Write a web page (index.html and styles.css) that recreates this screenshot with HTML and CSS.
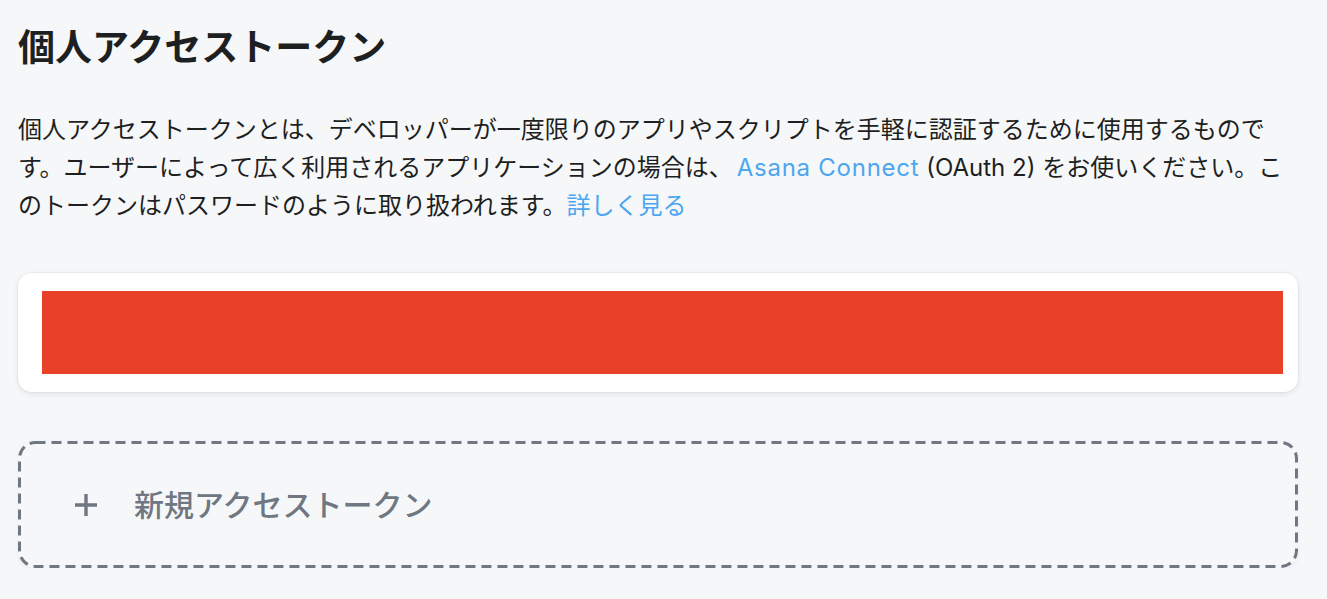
FILE: index.html
```html
<!DOCTYPE html>
<html lang="ja">
<head>
<meta charset="utf-8">
<link rel="stylesheet" href="styles.css">
</head>
<body>
<main class="page">
  <h1 class="title">個人アクセストークン</h1>
  <p class="desc">個人アクセストークンとは、デベロッパーが一度限りのアプリやスクリプトを手軽に認証するために使用するものです。ユーザーによって広く利用されるアプリケーションの場合は、<a class="link link-latin" href="#">Asana Connect</a> (OAuth 2) をお使いください。このトークンはパスワードのように取り扱われます。<a class="link" href="#">詳しく見る</a></p>
  <section class="card">
    <div class="redact"></div>
  </section>
  <button class="new-token" type="button">
    <svg class="dash" width="100%" height="100%" aria-hidden="true"><rect x="1.5" y="1.5" width="1277" height="124" rx="16" ry="16" fill="none" stroke="#6f7782" stroke-width="3" stroke-dasharray="10 6"/></svg>
    <svg class="plus" width="24" height="24" viewBox="0 0 24 24" aria-hidden="true"><path d="M12 1v22M1 12h22" stroke="currentColor" stroke-width="3.4" fill="none"/></svg>
    <span class="new-label">新規アクセストークン</span>
  </button>
</main>
</body>
</html>
```

FILE: styles.css
```css
html, body {
  margin: 0;
  padding: 0;
  background: #f6f7f9;
}
body {
  font-family: Inter, "Noto Sans CJK JP", sans-serif;
  color: #1e1f21;
}
.page {
  width: 1280px;
  padding: 21px 0 0 18px;
  display: flex;
  flex-direction: column;
}
.title {
  margin: 0;
  font-size: 37px;
  line-height: 48px;
  font-weight: 700;
  font-family: "Noto Sans CJK JP", sans-serif;
  color: #1e1f21;
}
.desc {
  margin: 42px 0 0 0;
  font-size: 24px;
  line-height: 38px;
  font-weight: 400;
}
.link {
  color: #4ca6f0;
  text-decoration: none;
}
.link-latin {
  letter-spacing: 0.75px;
  margin-left: 4px;
}
.card {
  margin-top: 48px;
  background: #ffffff;
  border-radius: 14px;
  box-shadow: 0 0 0 1px rgba(0,0,0,0.03), 0 2px 6px rgba(0,0,0,0.09);
  padding: 18px 15px 18px 24px;
  display: flex;
}
.redact {
  flex: 1;
  height: 83px;
  background: #e84127;
}
.new-token {
  position: relative;
  margin-top: 49px;
  height: 127px;
  box-sizing: border-box;
  border: none;
  border-radius: 16px;
  background: #f6f7f9;
  box-shadow: 0 1px 4px rgba(0,0,0,0.06);
  display: flex;
  align-items: center;
  padding: 0 0 0 56px;
  color: #6f7782;
  font-family: Inter, "Noto Sans CJK JP", sans-serif;
  cursor: pointer;
}
.dash {
  position: absolute;
  left: 0;
  top: 0;
  pointer-events: none;
}
.plus {
  flex: none;
  color: #6f7782;
}
.new-label {
  margin-left: 36px;
  font-size: 30px;
  line-height: 40px;
  font-weight: 500;
  color: #6f7782;
}
```
